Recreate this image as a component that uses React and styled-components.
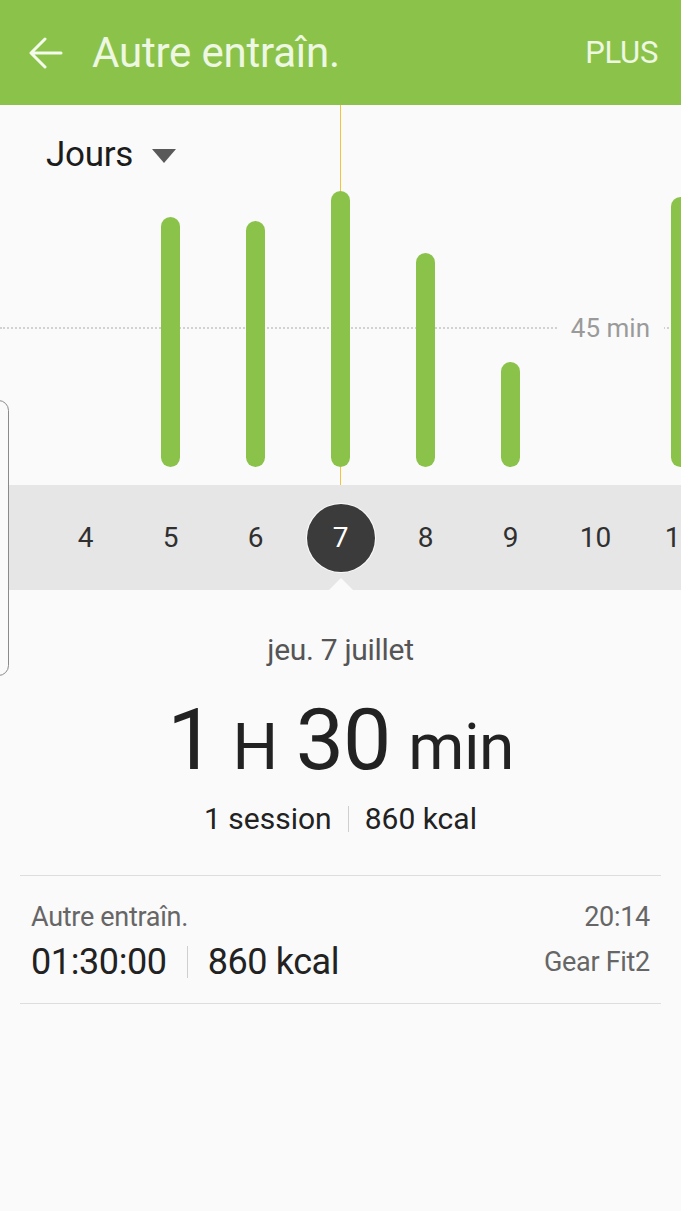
import React from 'react';
import styled, { createGlobalStyle } from 'styled-components';

const days = [
  { day: 4, minutes: 0 },
  { day: 5, minutes: 250 },
  { day: 6, minutes: 246 },
  { day: 7, minutes: 276 },
  { day: 8, minutes: 214 },
  { day: 9, minutes: 105 },
  { day: 10, minutes: 0 },
  { day: 11, minutes: 270 },
];

const SELECTED = 7;

export default function App() {
  return (
    <>
      <GlobalStyle />
      <Page>
        <Header>
          <BackButton aria-label="Retour">
            <svg width="34" height="32" viewBox="0 0 34 32" fill="none">
              <path
                d="M32 16H3M16 2L2 16l14 14"
                stroke="#f4faec"
                strokeWidth="3"
                strokeLinecap="round"
                strokeLinejoin="round"
              />
            </svg>
          </BackButton>
          <Title>Autre entraîn.</Title>
          <MoreButton>PLUS</MoreButton>
        </Header>

        <ChartArea>
          <Filter>
            Jours
            <Caret />
          </Filter>
          <Guide>
            <GuideLabel>45 min</GuideLabel>
          </Guide>
          <Columns $height="100%">
            {days.map(({ day, minutes }) => (
              <BarCell key={day} $selected={day === SELECTED}>
                {minutes > 0 && <Bar style={{ height: minutes }} />}
              </BarCell>
            ))}
          </Columns>
        </ChartArea>

        <DateStrip>
          <Columns $height="105px">
            {days.map(({ day }) => (
              <DayCell key={day} $selected={day === SELECTED}>
                <DayNumber $selected={day === SELECTED}>{day}</DayNumber>
              </DayCell>
            ))}
          </Columns>
        </DateStrip>

        <Summary>
          <DateLabel>jeu. 7 juillet</DateLabel>
          <Duration>
            <Big>1</Big>
            <Unit>H</Unit>
            <Big>30</Big>
            <Unit>min</Unit>
          </Duration>
          <Stats>
            <span>1 session</span>
            <Separator $height="26px" />
            <span>860 kcal</span>
          </Stats>
        </Summary>

        <SessionList>
          <SessionItem>
            <SessionRow>
              <SmallText>Autre entraîn.</SmallText>
              <SmallText>20:14</SmallText>
            </SessionRow>
            <SessionRow>
              <SessionValues>
                <span>01:30:00</span>
                <Separator $height="32px" />
                <span>860 kcal</span>
              </SessionValues>
              <SmallText>Gear Fit2</SmallText>
            </SessionRow>
          </SessionItem>
        </SessionList>

        <EdgeHandle />
      </Page>
    </>
  );
}

const GlobalStyle = createGlobalStyle`
  html, body {
    margin: 0;
    padding: 0;
    background: #fafafa;
  }
  body {
    font-family: Roboto, "Noto Sans", "Liberation Sans", sans-serif;
    -webkit-font-smoothing: antialiased;
  }
`;

const Page = styled.div`
  position: relative;
  width: 681px;
  min-height: 1211px;
  overflow: hidden;
  background: #fafafa;
`;

const Header = styled.header`
  display: flex;
  align-items: center;
  height: 105px;
  padding: 0 23px 0 29px;
  box-sizing: border-box;
  background: #8bc34a;
  color: #eef7e2;
`;

const BackButton = styled.div`
  display: flex;
  align-items: center;
  width: 34px;
  height: 32px;
  margin-right: 29px;
`;

const Title = styled.h1`
  flex: 1;
  margin: 0;
  font-size: 42px;
  font-weight: 400;
  letter-spacing: -0.2px;
`;

const MoreButton = styled.div`
  font-size: 31px;
  font-weight: 400;
  letter-spacing: -0.3px;
`;

const ChartArea = styled.section`
  position: relative;
  height: 380px;
`;

const Filter = styled.div`
  position: absolute;
  top: 29px;
  left: 46px;
  z-index: 2;
  display: flex;
  align-items: center;
  gap: 19px;
  font-size: 35px;
  color: #1c1c1c;
  letter-spacing: -0.3px;
`;

const Caret = styled.span`
  width: 0;
  height: 0;
  border-left: 12px solid transparent;
  border-right: 12px solid transparent;
  border-top: 14px solid #595959;
  margin-top: 2px;
`;

const Guide = styled.div`
  position: absolute;
  left: 0;
  right: 0;
  top: 222px;
  border-top: 2px dotted #d2d2d2;
`;

const GuideLabel = styled.span`
  position: absolute;
  right: 17px;
  top: -17px;
  padding: 0 14px;
  background: #fafafa;
  font-size: 26px;
  line-height: 32px;
  color: #9a9a9a;
`;

const Columns = styled.div`
  position: relative;
  display: flex;
  height: ${(p) => p.$height};
  padding-left: 43px;
`;

const BarCell = styled.div`
  position: relative;
  flex: 0 0 85px;
  display: flex;
  justify-content: center;
  align-items: flex-end;
  padding-bottom: 18px;
  box-sizing: border-box;

  ${(p) => p.$selected && `
    &::before {
      content: '';
      position: absolute;
      top: 0;
      bottom: 0;
      left: 42px;
      width: 1px;
      background: #f2c43c;
    }
  `}
`;

const Bar = styled.div`
  position: relative;
  width: 19px;
  border-radius: 10px;
  background: #8bc34a;
`;

const DateStrip = styled.section`
  background: #e6e6e6;
`;

const DayCell = styled.div`
  position: relative;
  flex: 0 0 85px;
  display: flex;
  justify-content: center;
  align-items: center;

  ${(p) => p.$selected && `
    &::after {
      content: '';
      position: absolute;
      bottom: 0;
      left: 50%;
      margin-left: -12px;
      border-left: 12px solid transparent;
      border-right: 12px solid transparent;
      border-bottom: 12px solid #fafafa;
    }
  `}
`;

const DayNumber = styled.span`
  display: flex;
  justify-content: center;
  align-items: center;
  width: 68px;
  height: 68px;
  border-radius: 50%;
  font-size: 28px;
  color: ${(p) => (p.$selected ? '#ffffff' : '#303030')};
  background: ${(p) => (p.$selected ? '#3b3b3b' : 'transparent')};
  box-shadow: ${(p) => (p.$selected ? '0 0 0 1px rgba(255,255,255,0.85)' : 'none')};
`;

const Summary = styled.section`
  display: flex;
  flex-direction: column;
  align-items: center;
  padding-top: 42px;
`;

const DateLabel = styled.div`
  font-size: 30px;
  line-height: 36px;
  color: #555555;
  letter-spacing: -0.3px;
`;

const Duration = styled.div`
  display: flex;
  align-items: baseline;
  gap: 18px;
  margin-top: 29px;
  line-height: 86px;
  color: #222222;
`;

const Big = styled.span`
  font-size: 86px;
  letter-spacing: -1px;
`;

const Unit = styled.span`
  font-size: 64px;
  letter-spacing: -0.5px;
`;

const Stats = styled.div`
  display: flex;
  align-items: center;
  gap: 16px;
  margin-top: 10px;
  font-size: 30px;
  line-height: 36px;
  color: #222222;
`;

const Separator = styled.span`
  width: 1px;
  height: ${(p) => p.$height};
  background: #d0d0d0;
`;

const SessionList = styled.section`
  margin: 38px 20px 0;
  border-top: 1px solid #dddddd;
`;

const SessionItem = styled.div`
  display: flex;
  flex-direction: column;
  gap: 8px;
  padding: 25px 11px 20px;
  border-bottom: 1px solid #dddddd;
`;

const SessionRow = styled.div`
  display: flex;
  justify-content: space-between;
  align-items: center;
`;

const SmallText = styled.span`
  font-size: 27px;
  line-height: 32px;
  color: #666666;
  letter-spacing: -0.3px;
`;

const SessionValues = styled.div`
  display: flex;
  align-items: center;
  gap: 20px;
  font-size: 36px;
  line-height: 42px;
  color: #222222;
  letter-spacing: -0.4px;
`;

const EdgeHandle = styled.div`
  position: absolute;
  top: 400px;
  left: -12px;
  width: 19px;
  height: 274px;
  border: 1.5px solid #8a8a8a;
  border-radius: 12px;
  background: #fafafa;
`;
